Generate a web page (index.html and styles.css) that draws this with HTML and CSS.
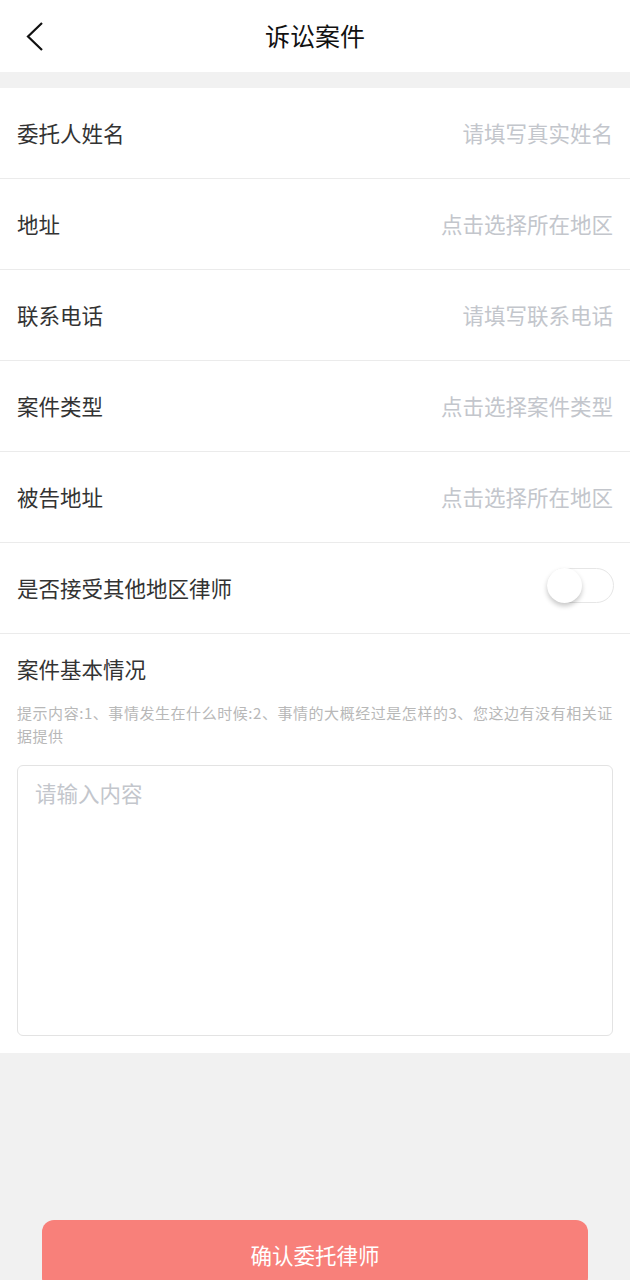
FILE: index.html
```html
<!DOCTYPE html>
<html lang="zh-CN">
<head>
<meta charset="utf-8">
<title>诉讼案件</title>
<link rel="stylesheet" href="styles.css">
</head>
<body>
<header class="topbar">
  <span class="back">
    <svg width="20" height="32" viewBox="0 0 20 32"><polyline points="17,3 3,16.5 17,30" fill="none" stroke="#111" stroke-width="2.2" stroke-linejoin="miter"/></svg>
  </span>
  <h1 class="title">诉讼案件</h1>
</header>
<div class="gap"></div>
<main class="form">
  <div class="row"><span class="label">委托人姓名</span><span class="ph">请填写真实姓名</span></div>
  <div class="row"><span class="label">地址</span><span class="ph">点击选择所在地区</span></div>
  <div class="row"><span class="label">联系电话</span><span class="ph">请填写联系电话</span></div>
  <div class="row"><span class="label">案件类型</span><span class="ph">点击选择案件类型</span></div>
  <div class="row"><span class="label">被告地址</span><span class="ph">点击选择所在地区</span></div>
  <div class="row"><span class="label">是否接受其他地区律师</span><span class="switch"><span class="knob"></span></span></div>
  <section class="detail">
    <div class="detail-title">案件基本情况</div>
    <p class="hint">提示内容:1、事情发生在什么时候:2、事情的大概经过是怎样的3、您这边有没有相关证据提供</p>
    <textarea class="box" placeholder="请输入内容"></textarea>
  </section>
</main>
<div class="footer">
  <button class="submit">确认委托律师</button>
</div>
</body>
</html>
```
FILE: styles.css
```css
* { box-sizing: border-box; }
html, body {
  margin: 0;
  padding: 0;
  background: #f1f1f1;
  font-family: "Noto Sans CJK SC", "Noto Sans", sans-serif;
}
.topbar {
  height: 72px;
  background: #fff;
  display: flex;
  align-items: center;
  justify-content: center;
  position: relative;
}
.back {
  position: absolute;
  left: 25px;
  top: 20px;
  width: 20px;
  height: 32px;
  display: block;
}
.back svg { display: block; }
.title {
  margin: 0;
  font-size: 25px;
  font-weight: 400;
  color: #111;
  line-height: 32px;
  margin-top: -2px;
}
.gap { height: 16px; }
.form {
  background: #fff;
}
.row {
  height: 91px;
  border-bottom: 1px solid #ebebeb;
  display: flex;
  align-items: center;
  justify-content: space-between;
  padding: 0 17px;
}
.label {
  font-size: 21.5px;
  color: #333;
  line-height: 30px;
}
.ph {
  font-size: 21.5px;
  color: #c3c6cc;
  line-height: 30px;
}
.switch {
  width: 67px;
  height: 35px;
  border: 1px solid #e6e6e6;
  border-radius: 18px;
  background: #fff;
  position: relative;
  margin-right: -1px;
  margin-top: -6px;
}
.knob {
  position: absolute;
  left: -1px;
  top: -1px;
  width: 35px;
  height: 35px;
  border-radius: 50%;
  background: #fff;
  box-shadow: 0 3px 5px rgba(0,0,0,0.22);
}
.detail {
  padding: 20px 17px 17px;
}
.detail-title {
  font-size: 21.5px;
  color: #333;
  line-height: 30px;
}
.hint {
  margin: 17px 0 0;
  font-size: 15px;
  letter-spacing: 0.55px;
  line-height: 23px;
  color: #b8b8b8;
}
.box {
  display: block;
  width: 100%;
  height: 271px;
  margin-top: 18px;
  border: 1px solid #e3e3e3;
  border-radius: 6px;
  padding: 12px 17px;
  font-family: "Noto Sans CJK SC", "Noto Sans", sans-serif;
  font-size: 21.5px;
  line-height: 30px;
  color: #333;
  resize: none;
  outline: none;
  background: #fff;
}
.box::placeholder { color: #c3c6cc; }
.footer {
  padding: 167px 42px 0;
}
.submit {
  display: block;
  width: 100%;
  height: 70px;
  border: none;
  border-radius: 12px;
  background: #f8807a;
  color: #fff;
  font-family: "Noto Sans CJK SC", "Noto Sans", sans-serif;
  font-size: 21.5px;
  line-height: 30px;
}
```
